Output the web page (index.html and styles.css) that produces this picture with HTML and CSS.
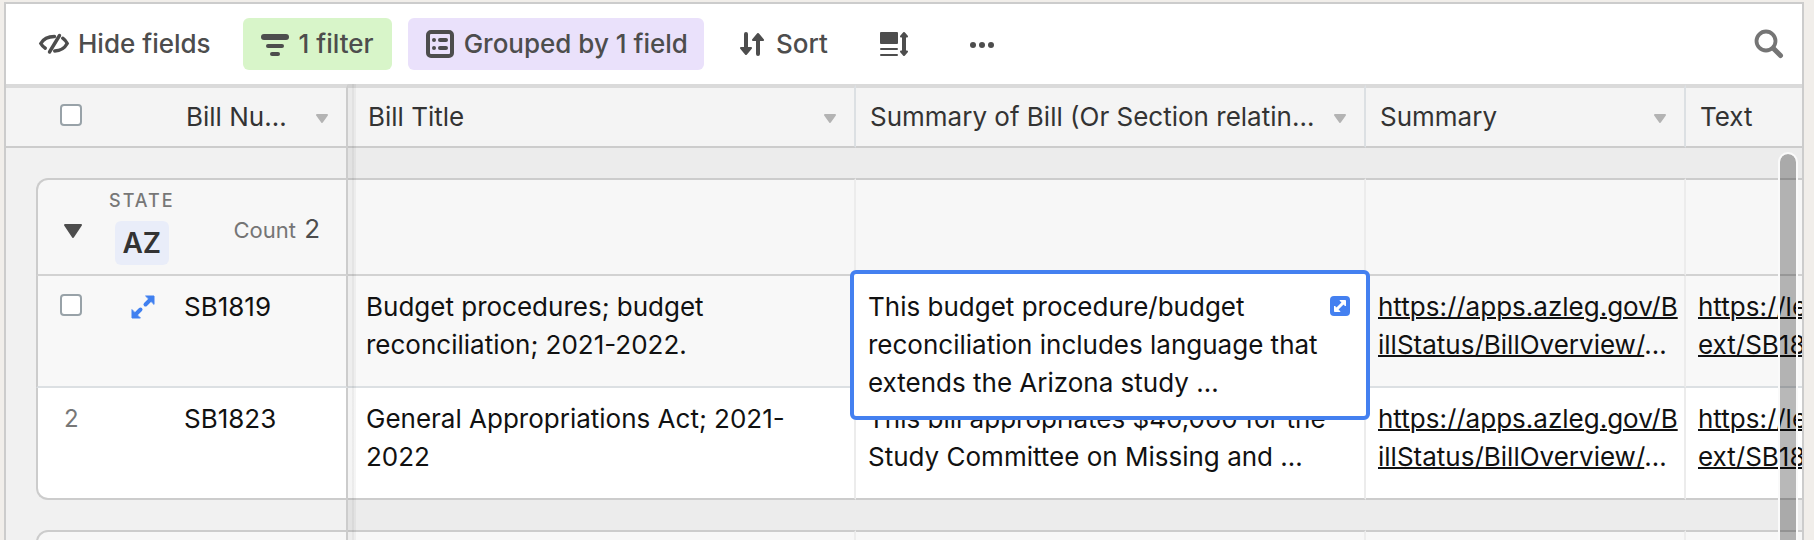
FILE: index.html
```html
<!DOCTYPE html>
<html lang="en">
<head>
<meta charset="utf-8">
<title>Bills</title>
<link rel="stylesheet" href="styles.css">
</head>
<body>
<main class="frame">
  <div class="toolbar" role="toolbar" aria-label="View options">
    <button class="tool" type="button">
      <svg class="tool-icon" viewBox="0 0 32 32" aria-hidden="true"><g fill="none" stroke="currentColor" stroke-width="3.400" stroke-linecap="round"><path d="M21.500 7.500 11.500 24"/><path d="M16.500 8.500C10 8.500 5 11.500 2.800 15.500c1 1.800 2.400 3.400 4.500 4.700"/><path d="M24.700 10.200c2.100 1.500 3.600 3.300 4.500 5.300-2.200 4-6.500 7.300-12.500 7.500"/></g></svg>
      <span>Hide fields</span>
    </button>
    <button class="tool tool-filter" type="button">
      <svg class="tool-icon" viewBox="0 0 32 32" aria-hidden="true"><g fill="currentColor"><rect x="2" y="6" width="28" height="6" rx="3"/><rect x="7" y="16" width="18" height="4" rx="2"/><rect x="11" y="24" width="10" height="4" rx="2"/></g></svg>
      <span>1 filter</span>
    </button>
    <button class="tool tool-group" type="button">
      <svg class="tool-icon" viewBox="0 0 32 32" aria-hidden="true"><rect x="4" y="4" width="24" height="24" rx="3" fill="none" stroke="currentColor" stroke-width="4"/><g fill="currentColor"><circle cx="10" cy="12" r="2"/><circle cx="10" cy="20" r="2"/><rect x="14" y="10" width="10" height="4" rx="2"/><rect x="14" y="18" width="10" height="4" rx="2"/></g></svg>
      <span>Grouped by 1 field</span>
    </button>
    <button class="tool" type="button">
      <svg class="tool-icon" viewBox="0 0 32 32" aria-hidden="true"><g fill="currentColor" stroke="currentColor" stroke-linejoin="round" stroke-linecap="round"><path d="M10 6v16M22 26V10" stroke-width="4"/><path d="m5 20 5 6 5-6ZM17 12l5-6 5 6Z" stroke-width="2"/></g></svg>
      <span>Sort</span>
    </button>
    <button class="tool tool-height" type="button" aria-label="Row height">
      <svg class="tool-icon" viewBox="0 0 32 32" aria-hidden="true"><g fill="currentColor"><rect x="2" y="4" width="18" height="12" rx="1"/><rect x="2" y="20" width="18" height="2" rx="1"/><rect x="2" y="26" width="18" height="2" rx="1"/><path d="M24 8h4v16h-4z"/><path d="m26 5 3 3.500h-6ZM26 27l3-3.500h-6Z" stroke="currentColor" stroke-width="2" stroke-linejoin="round"/></g></svg>
    </button>
    <button class="tool tool-more" type="button" aria-label="More options">
      <svg class="tool-icon" viewBox="0 0 32 32" aria-hidden="true"><g fill="currentColor"><circle cx="7" cy="17" r="3"/><circle cx="16" cy="17" r="3"/><circle cx="25" cy="17" r="3"/></g></svg>
    </button>
    <button class="tool tool-search" type="button" aria-label="Search">
      <svg class="tool-icon" viewBox="0 0 32 32" aria-hidden="true"><g fill="none" stroke="currentColor"><circle cx="12" cy="13" r="9.500" stroke-width="3.800"/><path d="m19.500 20.500 7 7" stroke-width="5" stroke-linecap="round"/></g></svg>
    </button>
  </div>

  <div class="sheet">
    <table class="grid">
      <colgroup>
        <col class="col-gutter"><col class="col-select"><col class="col-number"><col class="col-title"><col class="col-bill"><col class="col-link"><col class="col-link">
      </colgroup>
      <thead>
        <tr>
          <th></th>
          <th class="head-select"><input class="check" type="checkbox" aria-label="Select all rows"></th>
          <th class="frozen"><div class="head"><span class="head-label">Bill Number</span><svg class="caret" viewBox="0 0 12 16" aria-hidden="true"><path d="M1 6h10l-5 7Z"/></svg></div></th>
          <th class="after-frozen"><div class="head"><span class="head-label">Bill Title</span><svg class="caret" viewBox="0 0 12 16" aria-hidden="true"><path d="M1 6h10l-5 7Z"/></svg></div></th>
          <th><div class="head"><span class="head-label">Summary of Bill (Or Section relating to)</span><svg class="caret" viewBox="0 0 12 16" aria-hidden="true"><path d="M1 6h10l-5 7Z"/></svg></div></th>
          <th><div class="head"><span class="head-label">Summary</span><svg class="caret" viewBox="0 0 12 16" aria-hidden="true"><path d="M1 6h10l-5 7Z"/></svg></div></th>
          <th><div class="head"><span class="head-label">Text</span></div></th>
        </tr>
      </thead>
      <tbody>
        <tr class="gap"><td colspan="3" class="frozen"></td><td colspan="4" class="gap-main"></td></tr>
      </tbody>
      <tbody class="group">
        <tr class="group-head">
          <td class="gutter"></td>
          <td class="group-cell frozen box-left box-top" colspan="2">
            <div class="group-info">
              <button class="toggle" type="button" aria-label="Collapse group"><svg class="toggle-icon" viewBox="0 0 20 16" aria-hidden="true"><path d="M2 2h16l-8 12Z"/></svg></button>
              <div class="group-name"><span class="group-field">STATE</span><span class="badge">AZ</span></div>
              <div class="group-count">Count <b class="count-value">2</b></div>
            </div>
          </td>
          <td></td><td></td><td></td><td></td>
        </tr>
        <tr class="row row-active">
          <td class="gutter"></td>
          <td class="box-left">
            <div class="select">
              <input class="check" type="checkbox" aria-label="Select SB1819">
              <button class="expand" type="button" aria-label="Expand record"><svg class="expand-icon" viewBox="0 0 26 26" aria-hidden="true"><g fill="currentColor" stroke="currentColor" stroke-linejoin="round" stroke-linecap="round"><path d="m15.500 10.500 5-5M10.500 15.500l-5 5" stroke-width="4"/><path d="M16 2h8v8ZM2 16v8h8Z" stroke-width="1"/></g></svg></button>
            </div>
          </td>
          <td class="frozen">SB1819</td>
          <td class="after-frozen">Budget procedures; budget<br>reconciliation; 2021-2022.</td>
          <td class="editing">
            <div class="editor">
              <p class="editor-text">This budget procedure/budget<br>reconciliation includes language that<br>extends the Arizona study …</p>
              <button class="editor-expand" type="button" aria-label="Expand cell"><svg class="editor-icon" viewBox="0 0 20 20" aria-hidden="true"><g fill="currentColor" stroke="currentColor" stroke-linejoin="round"><path d="m6 14 8-8" stroke-width="3"/><path d="M10 4.500h5.500V10ZM4.500 10v5.500H10Z" stroke-width="1"/></g></svg></button>
            </div>
          </td>
          <td><a class="link" href="#">https://apps.azleg.gov/B<br>illStatus/BillOverview/</a>…</td>
          <td><a class="link" href="#">https://leg<br>ext/SB18</a></td>
        </tr>
        <tr class="row row-last">
          <td class="gutter"></td>
          <td class="box-left"><div class="select"><span class="row-number">2</span></div></td>
          <td class="frozen">SB1823</td>
          <td class="after-frozen">General Appropriations Act; 2021-<br>2022</td>
          <td>This bill appropriates $40,000 for the<br>Study Committee on Missing and …</td>
          <td><a class="link" href="#">https://apps.azleg.gov/B<br>illStatus/BillOverview/</a>…</td>
          <td><a class="link" href="#">https://leg<br>ext/SB18</a></td>
        </tr>
      </tbody>
      <tbody>
        <tr class="gap"><td colspan="3" class="frozen"></td><td colspan="4" class="gap-main"></td></tr>
      </tbody>
      <tbody class="group">
        <tr class="group-head">
          <td class="gutter"></td>
          <td class="group-cell frozen box-left box-top" colspan="2"></td>
          <td></td><td></td><td></td><td></td>
        </tr>
      </tbody>
    </table>
    <div class="frozen-shadow"></div>
    <div class="scrollbar"></div>
  </div>
</main>
</body>
</html>
```
FILE: styles.css
```css
*, *::before, *::after {
  box-sizing: border-box;
}

body {
  margin: 0;
  background: #f1eeea;
  color: #111;
  font-family: Inter, "Liberation Sans", sans-serif;
  font-size: 26px;
  line-height: 38px;
}

button {
  margin: 0;
  padding: 0;
  border: 0;
  background: none;
  color: inherit;
  font: inherit;
}

.frame {
  display: flex;
  flex-direction: column;
  height: 100vh;
  padding: 2px 10px 0 4px;
}

.toolbar {
  display: flex;
  align-items: center;
  gap: 16px;
  padding: 14px 16px;
  border: 2px solid #ccc;
  border-bottom: 0;
  background: #fff;
}

.tool {
  display: flex;
  align-items: center;
  gap: 8px;
  height: 52px;
  padding: 0 16px;
  border-radius: 6px;
  color: #4d4d4d;
  font-weight: 500;
  white-space: nowrap;
}

.tool-icon {
  width: 32px;
  height: 32px;
}

.tool-filter {
  padding-right: 18px;
  background: #d8f5c9;
}

.tool-group {
  background: #eae1fb;
}

.tool-height {
  padding: 0 18px;
}

.tool-more {
  padding: 0 22px;
}

.tool-search {
  margin-left: auto;
  padding: 0;
  color: #757575;
}

.sheet {
  position: relative;
  flex: 1;
  overflow: hidden;
  border: 2px solid #ccc;
  border-width: 0 2px;
  background: #f1f1f1;
}

.grid {
  width: 2000px;
  border-spacing: 0;
  table-layout: fixed;
}

.col-gutter { width: 30px; }
.col-select { width: 136px; }
.col-number { width: 176px; }
.col-title { width: 508px; }
.col-bill { width: 510px; }
.col-link { width: 320px; }

th {
  height: 64px;
  padding: 0 18px 0 14px;
  border-top: 4px solid #dadada;
  border-right: 2px solid #dce0e3;
  border-bottom: 2px solid #ccc;
  background: #f4f4f4;
  color: #333;
  font-weight: 400;
  text-align: left;
}

th:nth-child(-n + 2) {
  border-right: 0;
}

.head-select {
  padding: 0 0 4px 24px;
}

.head {
  display: flex;
  align-items: center;
  justify-content: space-between;
  gap: 16px;
}

.head-label {
  overflow: hidden;
  text-overflow: ellipsis;
  white-space: nowrap;
}

.caret {
  flex: none;
  width: 12px;
  height: 16px;
  fill: #b3b3b3;
  stroke: #b3b3b3;
  stroke-width: 2px;
  stroke-linejoin: round;
}

td {
  padding: 12px 0 0 12px;
  border-right: 2px solid #ececec;
  vertical-align: top;
  white-space: nowrap;
}

.frozen {
  border-right: 2px solid #ccc;
}

th.after-frozen {
  padding-left: 20px;
}

td.after-frozen {
  padding-left: 18px;
}

.gap td {
  height: 30px;
  padding: 0;
}

.gap-main {
  border-right: 0;
  background: #ececec;
}

td.gutter {
  padding: 0;
  border: 0;
  background: none;
}

.group-head td:not(.gutter) {
  height: 98px;
  padding: 0;
  border-top: 2px solid #ccc;
  border-bottom: 2px solid #d2d2d2;
  background: #f7f7f7;
}

.group td.box-left {
  padding-left: 22px;
  border-left: 2px solid #ccc;
}

.group td.box-left:not(.frozen) {
  border-right: 0;
}

.group-head td.box-top {
  border-top-left-radius: 12px;
}

.group-info {
  display: flex;
  align-items: center;
  height: 94px;
  padding: 0 26px 0 3px;
}

.toggle,
.toggle-icon {
  display: block;
  width: 20px;
  height: 16px;
}

.toggle {
  margin-top: 8px;
}

.toggle-icon {
  fill: #4d4d4d;
  stroke: #4d4d4d;
  stroke-width: 2px;
  stroke-linejoin: round;
}

.group-name {
  display: flex;
  flex-direction: column;
  align-items: center;
  gap: 8px;
  margin-left: 26px;
}

.group-field {
  color: #777;
  font-size: 18px;
  font-weight: 500;
  letter-spacing: 2px;
  line-height: 24px;
}

.badge {
  padding: 3px 8px;
  border-radius: 6px;
  background: #e9edf9;
  color: #333;
  font-size: 28px;
  font-weight: 600;
}

.group-count {
  margin-left: auto;
  padding-top: 4px;
  color: #757575;
  font-size: 22px;
}

.count-value {
  margin-left: 2px;
  color: #4d4d4d;
  font-size: 26px;
  font-weight: 400;
}

.row td {
  height: 112px;
}

.row td:not(.gutter) {
  border-bottom: 2px solid #dce0e3;
  background: #fff;
}

.row-active td:not(.gutter) {
  background: #f8f8f8;
}

.row-last td:not(.gutter) {
  border-bottom-color: #ccc;
}

.row-last td.box-left {
  border-bottom-left-radius: 12px;
}

.select {
  display: flex;
  align-items: center;
  gap: 48px;
  height: 38px;
}

.check {
  display: block;
  width: 22px;
  height: 22px;
  margin: 0;
  appearance: none;
  border: 2px solid #98a2a8;
  border-radius: 4px;
  background: #fff;
}

.row .check {
  margin-bottom: 4px;
}

.expand {
  color: #4080f0;
}

.expand-icon {
  display: block;
  width: 26px;
  height: 26px;
}

.row-number {
  padding-left: 4px;
  color: #777;
  font-size: 24px;
}

.editing {
  position: relative;
}

.editor {
  position: absolute;
  inset: -6px -6px auto -6px;
  z-index: 1;
  display: flex;
  align-items: flex-start;
  justify-content: space-between;
  height: 150px;
  padding: 14px 16px 0 14px;
  border: 4px solid #4480f0;
  border-radius: 6px;
  background: #fff;
}

.editor-text {
  margin: 0;
}

.editor-expand {
  flex: none;
  width: 20px;
  margin-top: 8px;
  border-radius: 4px;
  background: #4480f0;
  color: #fff;
}

.editor-icon {
  display: block;
  width: 20px;
  height: 20px;
}

.link {
  color: inherit;
  text-decoration: underline;
  text-decoration-thickness: 2px;
}

/* Edge of the frozen columns, drawn over the scrolling ones */
.frozen-shadow {
  position: absolute;
  top: 0;
  bottom: 0;
  left: 342px;
  width: 8px;
  background: linear-gradient(90deg, transparent 4px, rgba(0, 0, 0, 0.04) 4px 6px, transparent 6px), rgba(0, 0, 0, 0.04);
}

.scrollbar {
  position: absolute;
  top: 68px;
  right: 4px;
  bottom: -12px;
  width: 20px;
  border: 2px solid #fafafa;
  border-radius: 10px;
  background: rgba(0, 0, 0, 0.28);
  background-clip: padding-box;
}
```
